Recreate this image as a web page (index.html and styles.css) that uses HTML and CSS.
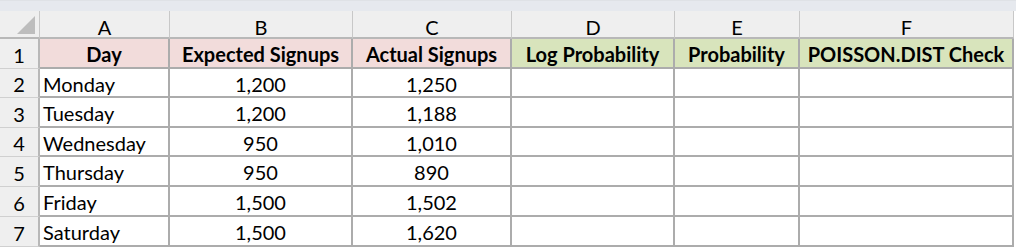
FILE: index.html
```html
<!DOCTYPE html>
<html>
<head>
<meta charset="utf-8">
<link rel="stylesheet" href="styles.css">
</head>
<body>
<div class="topband"></div>
<div class="sheet">
  <div class="corner"><svg width="18" height="18" viewBox="0 0 18 18"><polygon points="18,0 18,18 0,18" fill="#bdbdbd"/></svg></div>
  <div class="colhdr">A</div>
  <div class="colhdr">B</div>
  <div class="colhdr">C</div>
  <div class="colhdr">D</div>
  <div class="colhdr">E</div>
  <div class="colhdr">F</div>

  <div class="rowhdr">1</div>
  <div class="cell bold pink center">Day</div>
  <div class="cell bold pink center">Expected Signups</div>
  <div class="cell bold pink center">Actual Signups</div>
  <div class="cell bold green center">Log Probability</div>
  <div class="cell bold green center">Probability</div>
  <div class="cell bold green center">POISSON.DIST Check</div>

  <div class="rowhdr">2</div>
  <div class="cell">Monday</div>
  <div class="cell center">1,200</div>
  <div class="cell center">1,250</div>
  <div class="cell"></div><div class="cell"></div><div class="cell"></div>

  <div class="rowhdr">3</div>
  <div class="cell">Tuesday</div>
  <div class="cell center">1,200</div>
  <div class="cell center">1,188</div>
  <div class="cell"></div><div class="cell"></div><div class="cell"></div>

  <div class="rowhdr">4</div>
  <div class="cell">Wednesday</div>
  <div class="cell center">950</div>
  <div class="cell center">1,010</div>
  <div class="cell"></div><div class="cell"></div><div class="cell"></div>

  <div class="rowhdr">5</div>
  <div class="cell">Thursday</div>
  <div class="cell center">950</div>
  <div class="cell center">890</div>
  <div class="cell"></div><div class="cell"></div><div class="cell"></div>

  <div class="rowhdr">6</div>
  <div class="cell">Friday</div>
  <div class="cell center">1,500</div>
  <div class="cell center">1,502</div>
  <div class="cell"></div><div class="cell"></div><div class="cell"></div>

  <div class="rowhdr">7</div>
  <div class="cell">Saturday</div>
  <div class="cell center">1,500</div>
  <div class="cell center">1,620</div>
  <div class="cell"></div><div class="cell"></div><div class="cell"></div>
</div>
</body>
</html>
```
FILE: styles.css
```css
html, body {
  margin: 0;
  padding: 0;
  background: #ffffff;
}
body {
  font-family: "Lato", "Open Sans", sans-serif;
  font-size: 20px;
  color: #000;
  width: 1016px;
  height: 248px;
  overflow: hidden;
}
.topband {
  height: 11px;
  background: #e6e9ee;
  border-top: 1px solid #dfe2e6;
  box-sizing: border-box;
}
.sheet {
  display: grid;
  grid-template-columns: 40px 130px 183px 159px 163px 125px 214px;
  grid-template-rows: 28px 30px 29px 30px 29px 30px 30px 30px;
}
.corner {
  background: #efefef;
  border-right: 1px solid #c8c8c8;
  border-bottom: 2px solid #b8b8b8;
  display: flex;
  align-items: flex-end;
  justify-content: flex-end;
  padding: 0 4px 3px 0;
}
.colhdr {
  background: #efefef;
  border-right: 1px solid #c8c8c8;
  border-bottom: 2px solid #b8b8b8;
  display: flex;
  align-items: center;
  justify-content: center;
  padding-top: 5px;
}
.rowhdr {
  background: #efefef;
  border-right: 2px solid #b8b8b8;
  border-bottom: 1px solid #d0d0d0;
  display: flex;
  align-items: center;
  justify-content: center;
  padding-top: 2px;
}
.cell {
  border-right: 2px solid #acacac;
  border-bottom: 2px solid #acacac;
  display: flex;
  align-items: center;
  padding-left: 3px;
  padding-top: 2px;
  white-space: nowrap;
  overflow: hidden;
}
.center {
  justify-content: center;
  padding-left: 0;
}
.bold {
  font-weight: 700;
}
.pink {
  background: #f2dcdb;
}
.green {
  background: #d8e4bc;
}
```
